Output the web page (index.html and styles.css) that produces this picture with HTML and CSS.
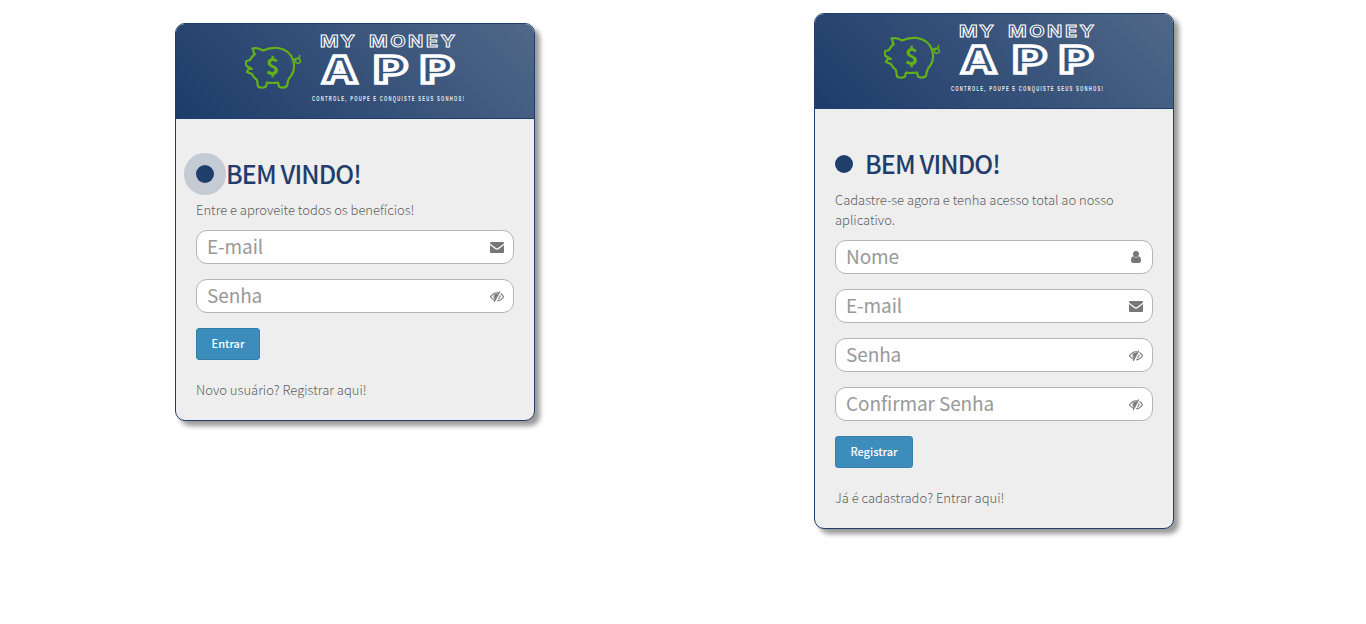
FILE: index.html
```html
<!DOCTYPE html>
<html lang="pt-BR">
<head>
<meta charset="utf-8">
<title>My Money App</title>
<link rel="stylesheet" href="styles.css">
</head>
<body>
<svg class="sprite" aria-hidden="true">
  <symbol id="pig" viewBox="0 0 58 44">
    <path d="M9 8Q9 5 7.500 2.500Q13 1 18 4.500Q25 1 33 2Q45 4 48 14Q51 23 46 30Q44 32 43 35L42 40Q38 43 34 40.500L33 36.500Q27 37.500 22 36.500L21 40.500Q17 43 13 40.500L12 34Q9 32 7 28L2 26L3.500 23L7 23L1.500 20Q0 17 1.500 15L5 14Q7 10 10 8Z"/>
    <path class="tail" d="M48 14Q50.500 11.500 53.500 12.500Q56.500 14 55 16.500Q52.500 18.500 50.500 16Q50 13 53 12.500Q55 11.500 54.500 9.500"/>
  </symbol>
  <symbol id="mail" viewBox="0 0 14 11">
    <path d="M1 0H13Q14 0 14 1V1.600L8 6Q7 6.700 6 6L0 1.600V1Q0 0 1 0ZM0 3L5.500 7.200Q7 8.100 8.500 7.200L14 3V10Q14 11 13 11H1Q0 11 0 10Z"/>
  </symbol>
  <symbol id="user" viewBox="0 0 10 12">
    <path d="M5 0A3 3 0 0 1 5 6A3 3 0 0 1 5 0ZM2.300 5.200Q5 7.600 7.700 5.200Q10 5.500 10 9.600Q10 12 8 12H2Q0 12 0 9.600Q0 5.500 2.300 5.200Z"/>
  </symbol>
  <symbol id="eye" viewBox="0 0 14 12">
    <path class="eye-line" d="M4.600 9.300Q2 8.300 .5 5.800Q3 1.900 7 1.700L8.300 1.800M10.600 2.600Q12.500 3.700 13.500 5.800Q11.300 9.500 7.200 9.900M9.800 .5L4.200 11M4.500 3.200Q3.300 6.400 5.300 8M10 4.400Q10.300 6.600 8.500 8"/>
    <path d="M5 3.200L8.800 1.900L5.800 7.600Q4.200 6 5 3.200Z"/>
  </symbol>
</svg>
<main class="page">
  <section class="card card-login">
    <header class="card-header">
      <svg class="logo" viewBox="0 0 358 94">
        <use class="pig" href="#pig" x="69" y="22" width="58" height="44"/>
        <text class="coin" x="96.500" y="50.500">$</text>
        <text class="brand-small" transform="translate(144 22.500) scale(1.250 1)" textLength="28">MY</text>
        <text class="brand-small" transform="translate(193 22.500) scale(1.250 1)" textLength="69">MONEY</text>
        <text class="brand-big" transform="translate(146 58.500) scale(1.250 1)">A</text>
        <text class="brand-big" transform="translate(197.500 58.500) scale(1.420 1)">P</text>
        <text class="brand-big" transform="translate(244 58.500) scale(1.420 1)">P</text>
        <text class="tagline" transform="translate(136 76.500) scale(.550 1)" textLength="276" lengthAdjust="spacing">CONTROLE, POUPE E CONQUISTE SEUS SONHOS!</text>
      </svg>
    </header>
    <div class="card-body">
      <h1 class="title"><span class="dot dot-halo"></span><span class="title-text">BEM VINDO!</span></h1>
      <p class="lead">Entre e aproveite todos os benefícios!</p>
      <div class="field"><span>E-mail</span><svg class="icon"><use href="#mail"/></svg></div>
      <div class="field"><span>Senha</span><svg class="icon icon-eye"><use href="#eye"/></svg></div>
      <button class="btn btn-login">Entrar</button>
      <p class="switch">Novo usuário? Registrar aqui!</p>
    </div>
  </section>
  <section class="card card-register">
    <header class="card-header">
      <svg class="logo" viewBox="0 0 358 94">
        <use class="pig" href="#pig" x="69" y="22" width="58" height="44"/>
        <text class="coin" x="96.500" y="50.500">$</text>
        <text class="brand-small" transform="translate(144 22.500) scale(1.250 1)" textLength="28">MY</text>
        <text class="brand-small" transform="translate(193 22.500) scale(1.250 1)" textLength="69">MONEY</text>
        <text class="brand-big" transform="translate(146 58.500) scale(1.250 1)">A</text>
        <text class="brand-big" transform="translate(197.500 58.500) scale(1.420 1)">P</text>
        <text class="brand-big" transform="translate(244 58.500) scale(1.420 1)">P</text>
        <text class="tagline" transform="translate(136 76.500) scale(.550 1)" textLength="276" lengthAdjust="spacing">CONTROLE, POUPE E CONQUISTE SEUS SONHOS!</text>
      </svg>
    </header>
    <div class="card-body">
      <h1 class="title"><span class="dot"></span><span class="title-text">BEM VINDO!</span></h1>
      <p class="lead">Cadastre-se agora e tenha acesso total ao nosso aplicativo.</p>
      <div class="field"><span>Nome</span><svg class="icon icon-user"><use href="#user"/></svg></div>
      <div class="field"><span>E-mail</span><svg class="icon"><use href="#mail"/></svg></div>
      <div class="field"><span>Senha</span><svg class="icon icon-eye"><use href="#eye"/></svg></div>
      <div class="field"><span>Confirmar Senha</span><svg class="icon icon-eye"><use href="#eye"/></svg></div>
      <button class="btn btn-register">Registrar</button>
      <p class="switch">Já é cadastrado? Entrar aqui!</p>
    </div>
  </section>
</main>
</body>
</html>
```
FILE: styles.css
```css
* { box-sizing: border-box; }
body {
  margin: 0;
  background: #fff;
  font-family: "Noto Sans CJK SC", "Noto Sans", sans-serif;
  font-size: 13px;
  line-height: 20px;
  color: #777;
}
.sprite { display: none; }
.page {
  display: flex;
  align-items: flex-start;
  gap: 279px;
  min-height: 100vh;
  padding: 13px 0 0 175px;
}
.card {
  width: 360px;
  border: 1px solid #1f3e6c;
  border-radius: 10px;
  background: #eee;
  box-shadow: 5px 5px 5px rgba(0, 0, 0, .4);
  overflow: hidden;
}
.card-login { height: 398px; margin-top: 10px; }
.card-register { height: 516px; }
.card-header {
  height: 95px;
  border-bottom: 1px solid #1f3e6c;
  background: linear-gradient(45deg, #1d3c6a, #506788);
}
.logo { display: block; width: 358px; height: 94px; }
.pig { fill: none; stroke: #64b019; stroke-width: 2.2; stroke-linejoin: round; stroke-linecap: round; }
.tail { stroke-width: 1.5; }
.coin { fill: #64b019; font: 700 23px "Noto Sans CJK SC", sans-serif; text-anchor: middle; }
.brand-small { fill: none; stroke: #fff; stroke-width: .9; font: 700 16px Inter, sans-serif; }
.brand-big {
  fill: #35547f;
  stroke: #fff;
  stroke-width: 3.4;
  stroke-miterlimit: 2;
  font: 800 37px Inter, sans-serif;
}
.tagline { fill: #e8edf3; font: 700 7.5px "Liberation Sans", sans-serif; }
.card-body { padding: 37px 20px 0; }
.title {
  display: flex;
  align-items: center;
  height: 36px;
  margin: 0;
  font-size: 25px;
  font-weight: 500;
  line-height: 34px;
  letter-spacing: -.9px;
  color: #1f3e6c;
}
.title-text { padding-bottom: 2px; }
.dot { width: 18px; height: 18px; margin-right: 12px; border-radius: 50%; background: #1f3e6c; }
.dot-halo { box-shadow: 0 0 0 12px #c5cbd5; }
.lead { margin: 8px 0 10px; font-weight: 300; letter-spacing: -.02px; color: #5e5e5e; }
.field {
  display: flex;
  align-items: center;
  justify-content: space-between;
  height: 34px;
  margin-bottom: 15px;
  padding: 0 9px 0 10px;
  border: 1px solid #b5b5b5;
  border-radius: 11px;
  background: #fff;
  font-size: 19px;
  line-height: 18px;
  letter-spacing: -.1px;
  color: #999;
}
.field span { padding-bottom: 2px; }
.icon { width: 14px; height: 11px; fill: #777; }
.icon-user { width: 10px; height: 12px; margin-right: 2px; }
.icon-eye { height: 12px; margin-top: 1px; }
.eye-line { fill: none; stroke: #777; stroke-width: 1.1; }
.btn {
  display: block;
  height: 32px;
  padding: 0 0 2px;
  border: 1px solid #367fa9;
  border-radius: 3px;
  background: #3c8dbc;
  color: #fff;
  font: 500 11px/20px "Noto Sans CJK SC", sans-serif;
}
.btn-login { width: 64px; }
.btn-register { width: 78px; }
.switch { margin: 20px 0 0; font-weight: 300; color: #5e5e5e; }
```
